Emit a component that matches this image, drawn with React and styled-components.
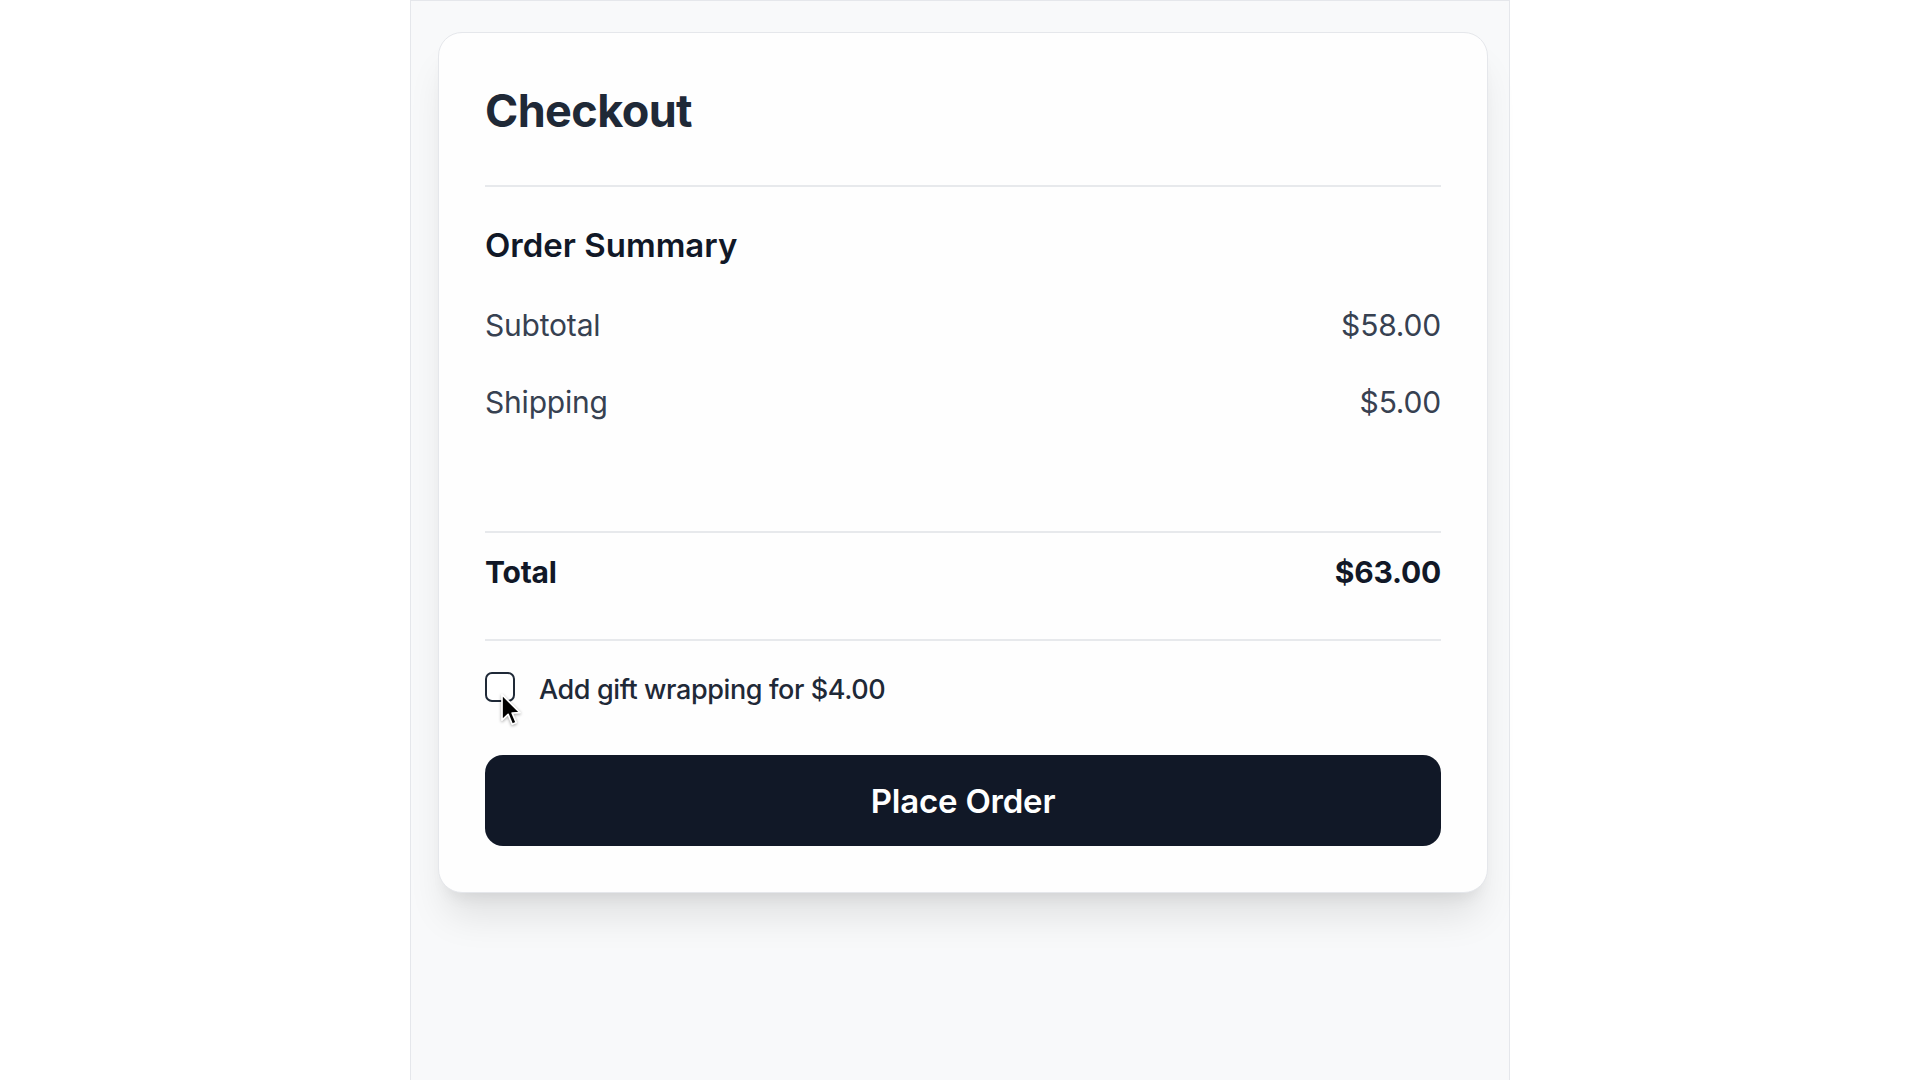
import React, { useState } from 'react';
import styled, { createGlobalStyle } from 'styled-components';

const GlobalStyle = createGlobalStyle`
  * {
    box-sizing: border-box;
  }

  body {
    margin: 0;
    background: #ffffff;
    font-family: Inter, "Noto Sans", "Liberation Sans", sans-serif;
    -webkit-font-smoothing: antialiased;
  }
`;

function Cursor() {
  return (
    <CursorIcon width="21" height="34" viewBox="0 0 12 20">
      <path
        d="M1 1 L1 16 L4.6 12.6 L7 18.4 L9.4 17.4 L7 11.8 L11.6 11.6 Z"
        fill="#000"
        stroke="#fff"
        strokeWidth="1"
        strokeLinejoin="round"
      />
    </CursorIcon>
  );
}

function App() {
  const [gift, setGift] = useState(false);
  const shipping = 5;
  const subtotal = 58;
  const total = subtotal + shipping + (gift ? 4 : 0);

  return (
    <>
      <GlobalStyle />
      <Page>
        <Card>
          <Title>Checkout</Title>
          <Divider $space={47} />
          <SectionTitle>Order Summary</SectionTitle>
          <Rows>
            <Row>
              <span>Subtotal</span>
              <span>${subtotal.toFixed(2)}</span>
            </Row>
            <Row>
              <span>Shipping</span>
              <span>${shipping.toFixed(2)}</span>
            </Row>
          </Rows>
          <Divider $space={111} />
          <Row $strong>
            <span>Total</span>
            <span>${total.toFixed(2)}</span>
          </Row>
          <Divider $space={49} />
          <GiftOption>
            <CheckWrap>
              <Checkbox
                type="checkbox"
                checked={gift}
                onChange={(e) => setGift(e.target.checked)}
              />
              <Cursor />
            </CheckWrap>
            <GiftLabel>Add gift wrapping for $4.00</GiftLabel>
          </GiftOption>
          <Button type="button">Place Order</Button>
        </Card>
      </Page>
    </>
  );
}

export default App;

const Page = styled.div`
  width: 1100px;
  min-height: 100vh;
  margin: 0 auto;
  padding: 31px 21px 60px 27px;
  background: #f8f9fa;
  border: 1px solid #e5e7eb;
  border-bottom: none;
`;

const Card = styled.div`
  display: flex;
  flex-direction: column;
  width: 1050px;
  padding: 51px 46px 46px;
  background: #fefefe;
  border: 1px solid #e5e7eb;
  border-radius: 24px;
  box-shadow: 0 30px 38px -8px rgba(0, 0, 0, 0.1), 0 12px 16px -9px rgba(0, 0, 0, 0.08);
`;

const Title = styled.h1`
  margin: 0;
  font-size: 45px;
  line-height: 54px;
  font-weight: 700;
  letter-spacing: -0.6px;
  color: #1f2937;
`;

const Divider = styled.div`
  height: 0;
  margin-top: ${(p) => p.$space}px;
  border-top: 2px solid #e7e9ec;
`;

const SectionTitle = styled.h2`
  margin: 38px 0 0;
  font-size: 33px;
  line-height: 40px;
  font-weight: 600;
  letter-spacing: 0;
  color: #111827;
`;

const Rows = styled.div`
  display: flex;
  flex-direction: column;
  gap: 41px;
  margin-top: 42px;
`;

const Row = styled.div`
  display: flex;
  justify-content: space-between;
  align-items: center;
  margin-top: ${(p) => (p.$strong ? '21px' : '0')};
  font-size: 30px;
  line-height: 36px;
  font-weight: ${(p) => (p.$strong ? 700 : 400)};
  letter-spacing: -0.2px;
  color: ${(p) => (p.$strong ? '#111827' : '#374151')};
`;

const GiftOption = styled.label`
  display: flex;
  align-items: flex-start;
  gap: 24px;
  margin-top: 31px;
  cursor: pointer;
`;

const CheckWrap = styled.span`
  position: relative;
  display: flex;
  width: 30px;
  height: 30px;
`;

const Checkbox = styled.input`
  appearance: none;
  width: 30px;
  height: 30px;
  margin: 0;
  border: 2px solid #1f2937;
  border-radius: 7px;
  background: #ffffff;
  cursor: pointer;

  &:checked {
    background: #111827;
  }
`;

const CursorIcon = styled.svg`
  position: absolute;
  left: 15px;
  top: 21px;
  filter: drop-shadow(0 1px 1.5px rgba(0, 0, 0, 0.35));
  pointer-events: none;
`;

const GiftLabel = styled.span`
  font-size: 27px;
  line-height: 36px;
  font-weight: 500;
  letter-spacing: -0.4px;
  color: #1f2937;
`;

const Button = styled.button`
  margin-top: 47px;
  height: 91px;
  width: 100%;
  border: none;
  border-radius: 18px;
  background: #111827;
  color: #ffffff;
  font-family: inherit;
  font-size: 33px;
  font-weight: 600;
  letter-spacing: -0.2px;
  cursor: pointer;
`;
